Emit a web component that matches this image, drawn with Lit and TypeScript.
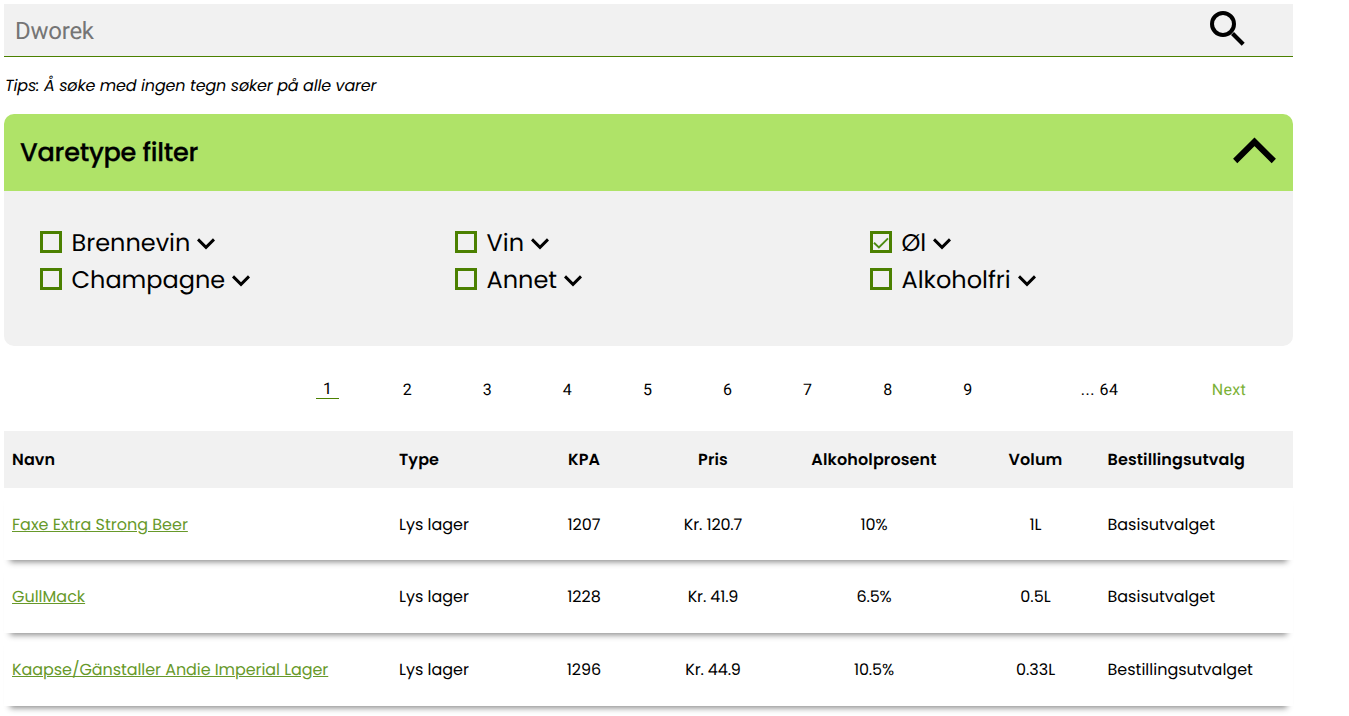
import { LitElement, html, css } from "lit";
import { customElement } from "lit/decorators.js";
import { classMap } from "lit/directives/class-map.js";

const filters: { label: string; checked?: boolean }[] = [
  { label: "Brennevin" },
  { label: "Vin" },
  { label: "Øl", checked: true },
  { label: "Champagne" },
  { label: "Annet" },
  { label: "Alkoholfri" },
];

const headings = ["Navn", "Type", "KPA", "Pris", "Alkoholprosent", "Volum", "Bestillingsutvalg"];

const rows = [
  ["Faxe Extra Strong Beer", "Lys lager", "1207", "Kr. 120.7", "10%", "1L", "Basisutvalget"],
  ["GullMack", "Lys lager", "1228", "Kr. 41.9", "6.5%", "0.5L", "Basisutvalget"],
  ["Kaapse/Gänstaller Andie Imperial Lager", "Lys lager", "1296", "Kr. 44.9", "10.5%", "0.33L", "Bestillingsutvalget"],
];

const pages = [1, 2, 3, 4, 5, 6, 7, 8, 9];

@customElement("app-root")
class AppRoot extends LitElement {
  static styles = css`
    :host {
      display: block;
      box-sizing: border-box;
      width: 1297px;
      height: 716px;
      overflow: hidden;
      padding: 4px;
      background: #fff;
      color: #000;
      font: 16px/24px Poppins, Inter, sans-serif;
      text-rendering: geometricPrecision;
    }
    * { box-sizing: border-box; }
    svg { display: block; flex: none; }
    .search {
      display: flex;
      justify-content: space-between;
      height: 53px;
      padding: 0 47px 0 11px;
      background: #f1f1f1;
      border-bottom: 1px solid #4b8000;
      font: 24px/54px Roboto, sans-serif;
      letter-spacing: -0.25px;
      color: #757575;
    }
    .glass { margin-top: 7px; }
    .tips {
      height: 57px;
      padding: 17px 0 0 1px;
      font-style: italic;
      letter-spacing: -0.17px;
    }
    .head {
      display: flex;
      align-items: center;
      justify-content: space-between;
      height: 77px;
      padding: 0 17px 0 16px;
      border-radius: 10px 10px 0 0;
      background: #afe368;
      font-size: 25.6px;
      font-weight: 500;
      letter-spacing: -0.27px;
      -webkit-text-stroke: 0.25px #000;
    }
    .name { margin-top: -1px; }
    .up { margin-top: -5px; }
    .filters {
      display: grid;
      grid-template-columns: repeat(3, 415px);
      grid-auto-rows: 37px;
      align-content: start;
      height: 155px;
      padding: 33px 0 0 36px;
      border-radius: 0 0 10px 10px;
      background: #f1f1f1;
      font-size: 24px;
      line-height: 40px;
    }
    .filter { display: flex; }
    .box {
      width: 22px;
      height: 22px;
      margin: 7px 9.5px 0 0;
      border: 3px solid #4b8000;
    }
    .down { margin: 14px 0 0 7px; }
    .pages {
      display: flex;
      height: 85px;
      padding: 33px 0 0 283px;
      font: 16px/22px Roboto, sans-serif;
    }
    .page { width: 80.1px; text-align: center; }
    .current {
      display: block;
      width: 23px;
      height: 20px;
      margin-left: 29px;
      line-height: 20px;
      border-bottom: 1px solid #4b8000;
    }
    .last { width: 131px; margin-left: 73px; letter-spacing: 0.5px; }
    .next { letter-spacing: 0.3px; color: #7bb136; }
    .row {
      display: grid;
      grid-template-columns: 387px 131px 108px 150px 172px 151px 1fr;
      height: 73px;
      padding: 1px 0 0 8px;
      align-items: center;
      box-shadow: 0 8px 6px -6px #8c8c8c;
    }
    .row.first { height: 72px; }
    .row.title {
      height: 57px;
      padding-top: 0;
      background: #f1f1f1;
      box-shadow: none;
      font-weight: 600;
      letter-spacing: 0.12px;
    }
    .mid { text-align: center; }
    .tight { letter-spacing: -0.15px; }
    .long { letter-spacing: -0.07px; }
    .util { margin-left: -3.5px; }
    .link { color: #67992a; text-decoration: underline; }
  `;

  private box(checked = false) {
    return html`<span class="box">${checked
      ? html`<svg width="16" height="16" viewBox="0 0 16 16" fill="none" stroke="#4b8b10" stroke-width="1.9"><path d="M1 8.7 5.9 13.5 15 4.3" /></svg>`
      : ""}</span>`;
  }

  private row(cells: string[], title = false, first = false) {
    return html`<div class=${classMap({ row: true, title, first })}>
      ${cells.map((c, i) => html`<span class=${classMap({
        mid: i > 1 && i < 6,
        util: i === 6,
        link: !title && i === 0,
        long: c.length > 30,
        tight: !title && (i === 3 || i === 4),
      })}>${c}</span>`)}
    </div>`;
  }

  render() {
    return html`
      <div class="search">
        <span>Dworek</span>
        <svg class="glass" width="36" height="36" viewBox="0 0 36 36" fill="none" stroke="#000">
          <circle cx="13" cy="13" r="11" stroke-width="4" />
          <path d="M22.5 22.5 33.2 33.2" stroke-width="4.2" />
        </svg>
      </div>
      <div class="tips">Tips: Å søke med ingen tegn søker på alle varer</div>
      <div class="head">
        <span class="name">Varetype filter</span>
        <svg class="up" width="43" height="27" viewBox="0 0 43 27" fill="none" stroke="#000" stroke-width="6"><path d="M2.2 24 21.5 4.8 40.8 24" /></svg>
      </div>
      <div class="filters">
        ${filters.map((f) => html`<div class="filter">
          ${this.box(f.checked)}<span>${f.label}</span>
          <svg class="down" width="18" height="12" viewBox="0 0 18 12" fill="none" stroke="#000" stroke-width="2.9"><path d="M1 1.4 9 9.4 17 1.4" /></svg>
        </div>`)}
      </div>
      <div class="pages">
        ${pages.map((p) => html`<span class="page"><span class=${classMap({ current: p === 1 })}>${p}</span></span>`)}
        <span class="last">... 64</span>
        <span class="next">Next</span>
      </div>
      ${this.row(headings, true)}
      ${rows.map((r, i) => this.row(r, false, i === 0))}
    `;
  }
}
